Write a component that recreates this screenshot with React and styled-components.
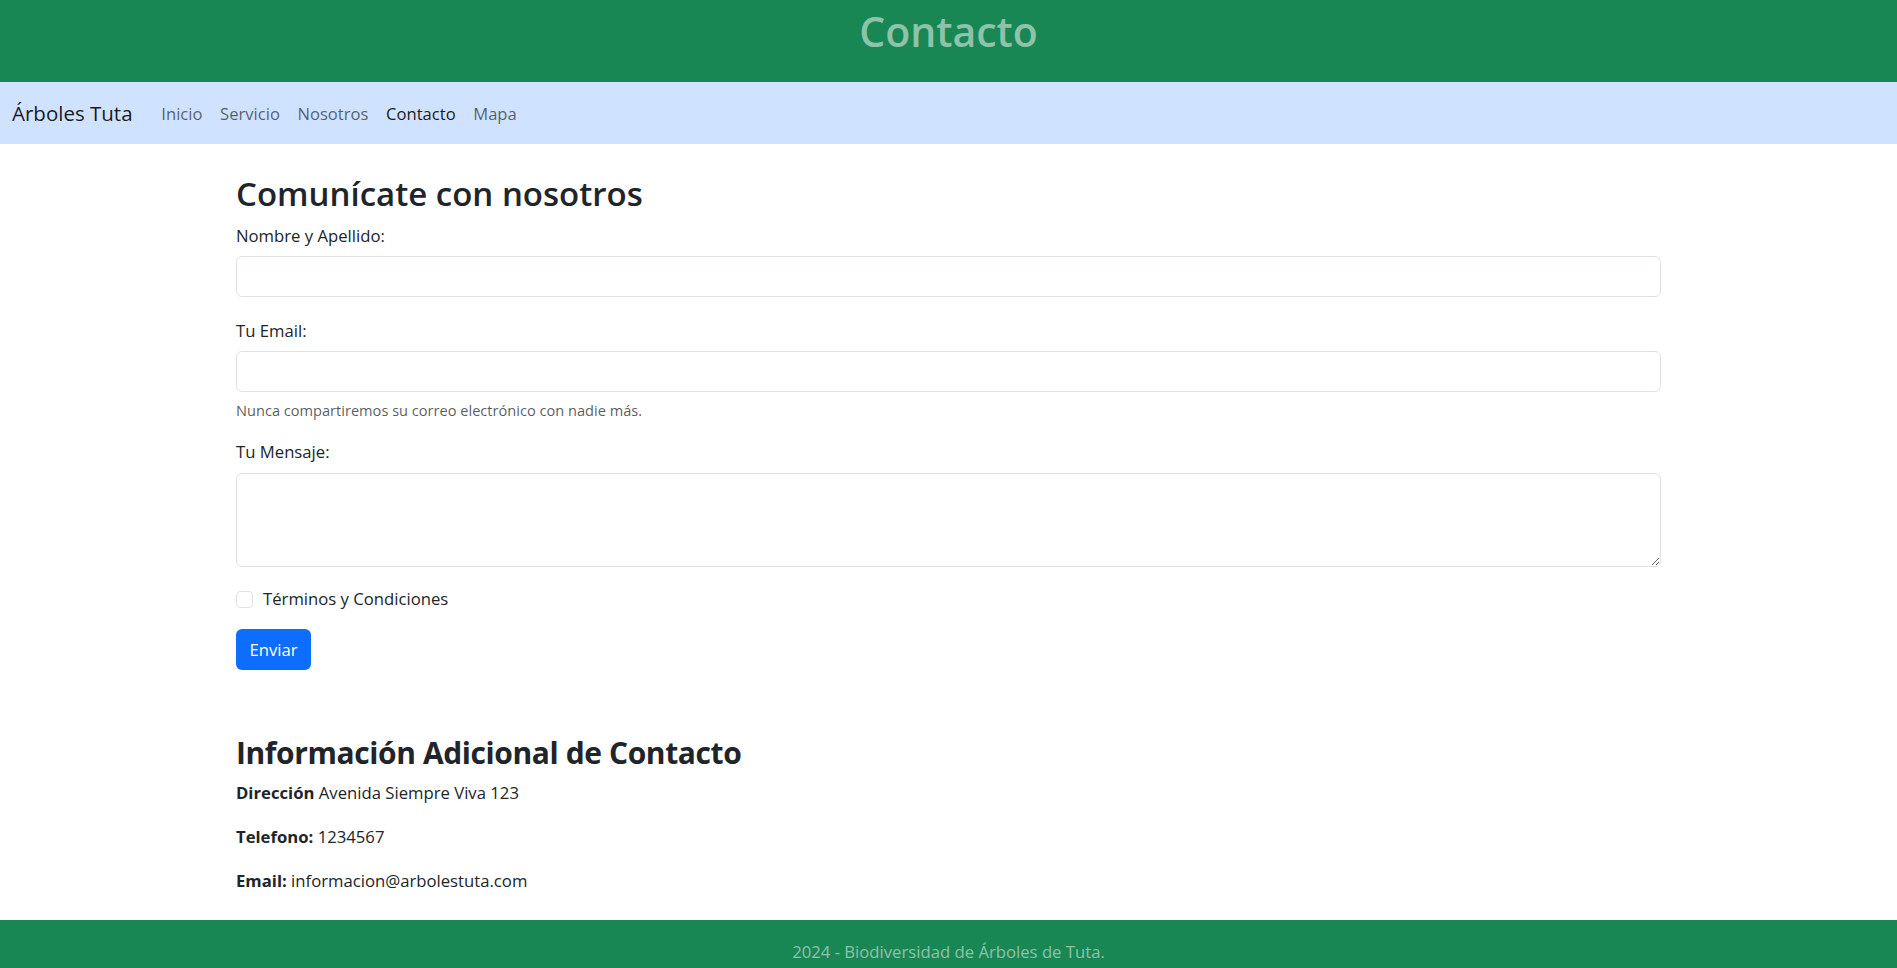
import styled, { createGlobalStyle } from "styled-components";

const GlobalStyle = createGlobalStyle`
  body {
    margin: 0;
    font-family: "Open Sans", "Noto Sans", sans-serif;
    color: #212529;
    background: #fff;
  }
`;

const Header = styled.header`
  background: #198754;
  height: 82px;
  display: flex;
  justify-content: center;
  align-items: flex-start;
  padding-top: 7px;
  box-sizing: border-box;
`;

const Title = styled.h1`
  margin: 0;
  font-size: 41px;
  line-height: 1.2;
  font-weight: 600;
  color: rgba(255, 255, 255, 0.5);
`;

const Nav = styled.nav`
  background: #cfe2ff;
  height: 62px;
  display: flex;
  align-items: center;
  padding: 0 12px;
`;

const Brand = styled.a`
  font-size: 20.5px;
  color: rgba(0, 0, 0, 0.9);
  text-decoration: none;
  margin-right: 20px;
`;

const NavLink = styled.a`
  font-size: 16.6px;
  padding: 0 8.8px;
  text-decoration: none;
  color: ${(p) => (p.$active ? "rgba(0, 0, 0, 0.9)" : "rgba(0, 0, 0, 0.6)")};
`;

const Main = styled.main`
  width: 1425px;
  margin: 0 auto;
  padding-top: 31px;
  font-size: 16.7px;
`;

const Heading = styled.h2`
  margin: 0 0 ${(p) => p.$mb || 11}px;
  margin-top: ${(p) => p.$mt || 0}px;
  font-size: ${(p) => p.$size || 33}px;
  line-height: 38px;
  font-weight: ${(p) => p.$weight || 600};
  letter-spacing: ${(p) => p.$tight || 0}px;
`;

const Group = styled.div`
  margin-bottom: ${(p) => p.$mb || 0}px;
`;

const Label = styled.label`
  display: block;
  line-height: 24px;
  margin-bottom: ${(p) => p.$mb || 8}px;
`;

const Input = styled.input`
  display: block;
  width: 100%;
  height: 41px;
  box-sizing: border-box;
  border: 1px solid #dee2e6;
  border-radius: 6px;
  padding: 6px 12px;
  font: inherit;
  outline: none;
`;

const TextArea = styled.textarea`
  display: block;
  width: 100%;
  height: 94px;
  box-sizing: border-box;
  border: 1px solid #dee2e6;
  border-radius: 6px;
  padding: 6px 12px;
  font: inherit;
  outline: none;
`;

const Help = styled.div`
  margin-top: 8px;
  font-size: 14.6px;
  line-height: 21px;
  color: rgba(33, 37, 41, 0.75);
`;

const CheckRow = styled.div`
  margin-top: 20px;
  display: flex;
  align-items: center;
  gap: 10px;
  line-height: 24px;
`;

const Check = styled.input`
  appearance: none;
  margin: 0;
  width: 17px;
  height: 17px;
  border: 1px solid #dee2e6;
  border-radius: 4px;
  background: #fff;
`;

const Button = styled.button`
  margin-top: 18px;
  display: block;
  height: 41px;
  padding: 0 13.5px;
  border: none;
  border-radius: 6px;
  background: #0d6efd;
  color: #fff;
  font: inherit;
`;

const Info = styled.p`
  margin: 0;
  margin-top: ${(p) => p.$mt}px;
  line-height: 24px;
`;

const Footer = styled.footer`
  margin-top: 27px;
  background: #198754;
  padding: 20px 0;
  text-align: center;
  color: rgba(255, 255, 255, 0.5);
  font-size: 16.7px;
  line-height: 24px;
`;

export default function App() {
  return (
    <>
      <GlobalStyle />
      <Header>
        <Title>Contacto</Title>
      </Header>
      <Nav>
        <Brand href="#">Árboles Tuta</Brand>
        <NavLink href="#">Inicio</NavLink>
        <NavLink href="#">Servicio</NavLink>
        <NavLink href="#">Nosotros</NavLink>
        <NavLink href="#" $active>
          Contacto
        </NavLink>
        <NavLink href="#">Mapa</NavLink>
      </Nav>
      <Main>
        <Heading>Comunícate con nosotros</Heading>
        <Group $mb={22}>
          <Label>Nombre y Apellido:</Label>
          <Input type="text" />
        </Group>
        <Group $mb={19}>
          <Label>Tu Email:</Label>
          <Input type="email" />
          <Help>Nunca compartiremos su correo electrónico con nadie más.</Help>
        </Group>
        <Group>
          <Label $mb={9}>Tu Mensaje:</Label>
          <TextArea />
        </Group>
        <CheckRow>
          <Check type="checkbox" />
          <span>Términos y Condiciones</span>
        </CheckRow>
        <Button>Enviar</Button>
        <Heading $mt={64} $mb={9} $weight={700} $size={30} $tight={-0.4}>
          Información Adicional de Contacto
        </Heading>
        <Info $mt={0}>
          <strong>Dirección</strong> Avenida Siempre Viva 123
        </Info>
        <Info $mt={20}>
          <strong>Telefono:</strong> 1234567
        </Info>
        <Info $mt={20}>
          <strong>Email:</strong> informacion@arbolestuta.com
        </Info>
      </Main>
      <Footer>2024 - Biodiversidad de Árboles de Tuta.</Footer>
    </>
  );
}
